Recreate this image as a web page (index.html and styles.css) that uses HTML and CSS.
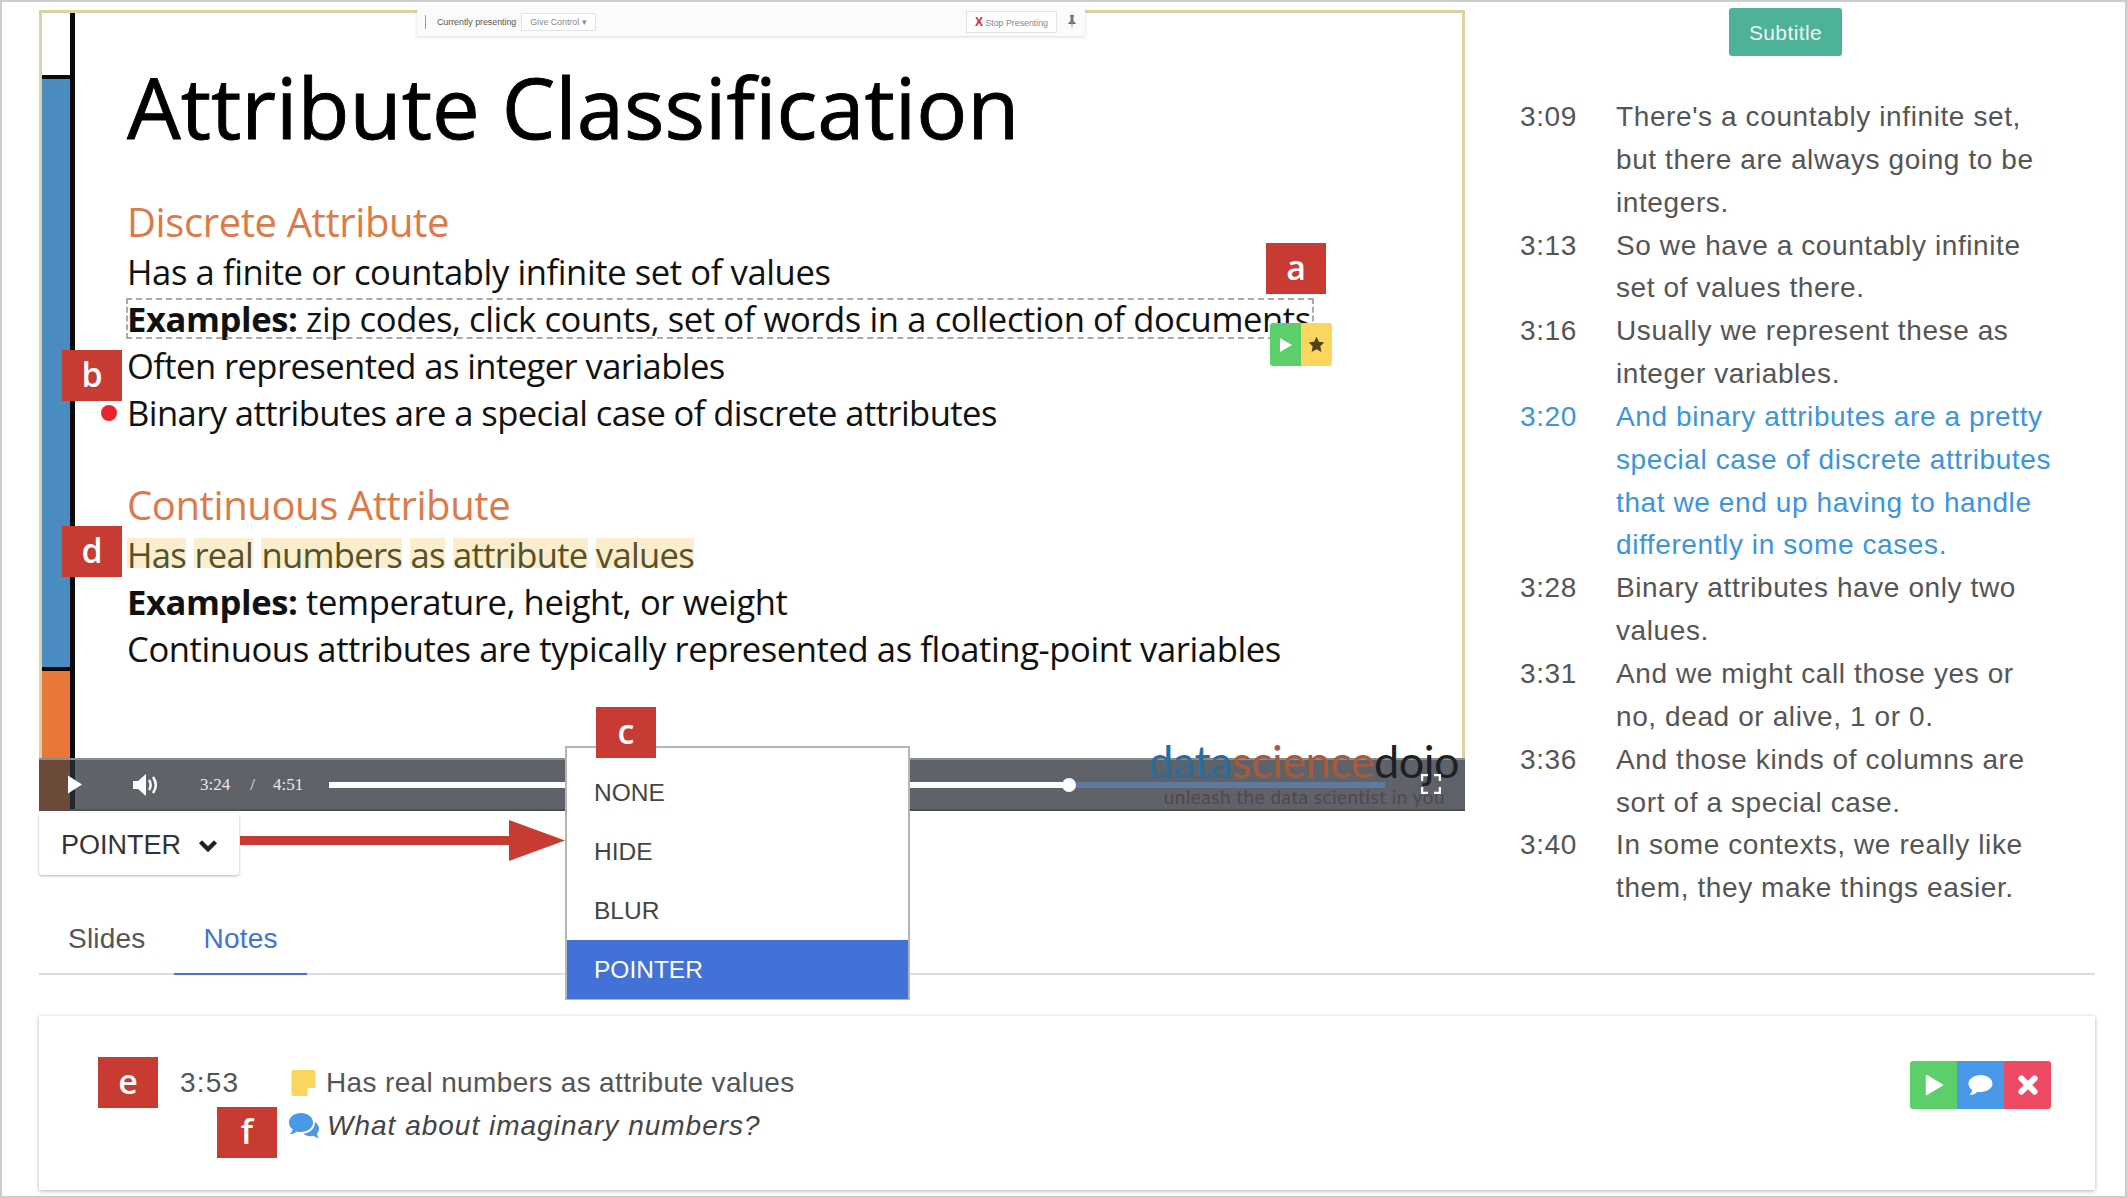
FILE: index.html
```html
<!DOCTYPE html>
<html lang="en">
<head>
    <meta charset="UTF-8">
    <meta name="viewport" content="width=device-width, initial-scale=1.0">
    <title>Attribute Classification</title>
    <link rel="stylesheet" href="styles.css">
</head>
<body>
<div class="frame">
    <div class="top">
        <div class="player-col">
            <div class="player">
                <div class="slide">
                    <div class="rail">
                        <div class="rail-white"></div>
                        <div class="rail-blue"></div>
                        <div class="rail-orange"></div>
                    </div>
                    <div class="slide-body">
                        <h1 class="slide-title">Attribute Classification</h1>
                        <h2 class="slide-head head-one">Discrete Attribute</h2>
                        <p class="slide-line">Has a finite or countably infinite set of values</p>
                        <p class="slide-line"><span class="dashed"><b>Examples:</b> zip codes, click counts, set of words in a collection of documents</span></p>
                        <p class="slide-line line-tight">Often represented as integer variables</p>
                        <p class="slide-line line-tight">Binary attributes are a special case of discrete attributes</p>
                        <h2 class="slide-head head-two">Continuous Attribute</h2>
                        <p class="slide-line line-hl"><span class="hl">Has</span> <span class="hl">real</span> <span class="hl">numbers</span> <span class="hl">as</span> <span class="hl">attribute</span> <span class="hl">values</span></p>
                        <p class="slide-line"><b>Examples:</b> temperature, height, or weight</p>
                        <p class="slide-line">Continuous attributes are typically represented as floating-point variables</p>
                    </div>
                </div>
                <div class="present-bar">
                    <span class="present-sep"></span>
                    <span>Currently presenting</span>
                    <span class="present-btn">Give Control &#9662;</span>
                    <span class="present-gap"></span>
                    <span class="present-btn"><i class="present-x">X</i> Stop Presenting</span>
                    <svg class="present-pin" viewBox="0 0 8 14"><path d="M2 0h4v1L5.500 2v4L8 8.500V9H4.500L4 14l-.5-5H0v-.5L2.500 6V2L2 1z" fill="#777"/></svg>
                </div>
                <div class="controls">
                    <svg class="ctl-play" viewBox="0 0 16 20"><path d="M1 1l14 9-14 9z" fill="#fff"/></svg>
                    <svg class="ctl-vol" viewBox="0 0 26 24"><path d="M0 8h5l8-7v22l-8-7H0z" fill="#fff"/><path d="M16 7c2 3 2 7 0 10M20 4c3.500 5 3.500 11 0 16" fill="none" stroke="#fff" stroke-width="2.500"/></svg>
                    <span class="ctl-time">3:24</span>
                    <span class="ctl-slash">/</span>
                    <span class="ctl-time">4:51</span>
                    <div class="track">
                        <div class="track-done"></div>
                        <div class="track-knob"></div>
                        <div class="track-rest"></div>
                    </div>
                </div>
                <div class="logo">
                    <div class="logo-name"><span class="logo-data">data</span><span class="logo-science">science</span><span class="logo-dojo">dojo</span></div>
                    <div class="logo-tag">unleash the data scientist in you</div>
                </div>
                <svg class="ctl-full" viewBox="0 0 20 20"><path d="M1 7V1h6M13 1h6v6M19 13v6h-6M7 19H1v-6" fill="none" stroke="#fff" stroke-width="2.500"/></svg>
                <span class="red-dot"></span>
                <span class="dash-btns">
                    <span class="dash-btn bg-green"><svg viewBox="0 0 14 16"><path d="M1 1l12 7-12 7z" fill="#fff"/></svg></span>
                    <span class="dash-btn bg-yellow"><svg viewBox="0 0 24 24"><path d="M12 1l3.400 7.200 7.600 1-5.600 5.400 1.500 7.900-6.900-3.900-6.900 3.900 1.500-7.900L1 9.200l7.600-1z" fill="#50431f"/></svg></span>
                </span>
            </div>
            <div class="mode-select">POINTER <svg class="chev" viewBox="0 0 16 12"><path d="M2 3l6 6 6-6" fill="none" stroke="#222" stroke-width="3.500"/></svg></div>
        </div>
        <div class="subs">
            <button class="subs-btn">Subtitle</button>
            <ul class="subs-list">
                <li class="sub-row"><span>3:09</span><span>There's a countably infinite set, but there are always going to be integers.</span></li>
                <li class="sub-row"><span>3:13</span><span>So we have a countably infinite set of values there.</span></li>
                <li class="sub-row"><span>3:16</span><span>Usually we represent these as integer variables.</span></li>
                <li class="sub-row sub-active"><span>3:20</span><span>And binary attributes are a pretty special case of discrete attributes that we end up having to handle differently in some cases.</span></li>
                <li class="sub-row"><span>3:28</span><span>Binary attributes have only two values.</span></li>
                <li class="sub-row"><span>3:31</span><span>And we might call those yes or no, dead or alive, 1 or 0.</span></li>
                <li class="sub-row"><span>3:36</span><span>And those kinds of columns are sort of a special case.</span></li>
                <li class="sub-row"><span>3:40</span><span>In some contexts, we really like them, they make things easier.</span></li>
            </ul>
        </div>
    </div>

    <div class="tabs">
        <a class="tab">Slides</a>
        <a class="tab tab-on">Notes</a>
    </div>

    <div class="note-card">
        <span class="note-time">3:53</span>
        <div class="note-text">
            <div class="note-line">
                <svg class="ic-sticky" viewBox="0 0 24 26"><path d="M2 0h20a2 2 0 0 1 2 2v16l-8 8H2a2 2 0 0 1-2-2V2a2 2 0 0 1 2-2z" fill="#fbd65e"/><path d="M24 18h-7a1 1 0 0 0-1 1v7z" fill="#fff"/></svg>
                Has real numbers as attribute values
            </div>
            <div class="note-line note-comment">
                <svg class="ic-chat" viewBox="0 0 32 28"><path d="M13 1c6.500 0 12 4 12 9.500S19.500 20 13 20c-1.500 0-3-.2-4-.6C7 21 4 22 2 22c1.500-1.500 2.500-3 2.600-5C2 15.500 1 13 1 10.500 1 5 6.500 1 13 1z" fill="#4a98e8"/><path d="M27 10c2.500 1.500 4 4 4 6.500 0 2-.8 3.600-2 5 .1 1.500.8 3 2 4.500-2 0-4-1-5.500-2.200-1 .3-2 .4-3 .4-3 0-5.500-1-7-2.700 6.500-.2 11.500-5 11.500-11.500z" fill="#4a98e8"/></svg>
                What about imaginary numbers?
            </div>
        </div>
        <div class="note-btns">
            <span class="note-btn bg-green"><svg viewBox="0 0 20 24"><path d="M2 2l17 10L2 22z" fill="#fff" stroke="#fff" stroke-width="2" stroke-linejoin="round"/></svg></span>
            <span class="note-btn bg-blue"><svg viewBox="0 0 26 22"><path d="M13 1c6.600 0 12 3.600 12 8.500S19.600 18 13 18c-1 0-2-.1-3-.3C8 19.800 5 21 2 21c1.500-1.500 2.500-3 2.600-5C2.400 14.500 1 12 1 9.500 1 4.600 6.400 1 13 1z" fill="#fff"/></svg></span>
            <span class="note-btn bg-red"><svg viewBox="0 0 20 20"><path d="M4 4l12 12M16 4L4 16" fill="none" stroke="#fff" stroke-width="5.500" stroke-linecap="round"/></svg></span>
        </div>
    </div>

    <!-- things sitting on top of the screenshot -->
    <svg class="pointer-arrow" viewBox="0 0 325 41"><path d="M0 16h269V0l56 20.500-56 20.500V25H0z" fill="#c73b33"/></svg>

    <ul class="mode-menu">
        <li>NONE</li>
        <li>HIDE</li>
        <li>BLUR</li>
        <li class="mode-on">POINTER</li>
    </ul>

    <span class="tag tag-a">a</span>
    <span class="tag tag-b">b</span>
    <span class="tag tag-c">c</span>
    <span class="tag tag-d">d</span>
    <span class="tag tag-e">e</span>
    <span class="tag tag-f">f</span>
</div>
</body>
</html>
```

FILE: styles.css
```css
* { box-sizing: border-box; }
html, body { margin: 0; background: #fff; }
body { font-family: "Liberation Sans", Arial, sans-serif; color: #444; }

.frame {
    position: relative;
    width: 2127px;
    height: 1198px;
    padding: 8px 30px 0 37px;
    border: 2px solid #cdcdcd;
    overflow: hidden;
}

.top { display: flex; }
.player-col { width: 1426px; flex: none; }
.player { position: relative; border: 3px solid #d9d5a3; border-bottom: 0; height: 801px; }

.slide { display: flex; height: 745px; background: #fff; overflow: hidden; }
.rail { width: 33px; flex: none; display: flex; flex-direction: column; border-right: 5px solid #0a0a0a; }
.rail-white { height: 66px; border-bottom: 4px solid #0a0a0a; }
.rail-blue { height: 592px; background: #4a8bc2; border-bottom: 4px solid #0a0a0a; }
.rail-orange { flex: 1; background: #e8783a; }

.slide-body { flex: 1; padding: 0 0 0 52px; color: #111; font-family: "Open Sans", sans-serif; }
.slide-title { margin: 35px 0 0; font-size: 85px; line-height: 116px; font-weight: 400; color: #000; letter-spacing: 0; -webkit-text-stroke: .9px #000; }
.slide-head { margin: 0; font-size: 40px; line-height: 52px; font-weight: 400; color: #dc7a48; letter-spacing: -.4px; }
.head-one { margin-top: 32px; }
.head-two { margin-top: 43px; }
.slide-line { margin: 0; font-size: 34.600px; line-height: 47px; white-space: nowrap; letter-spacing: -.4px; }
.slide-line b { font-weight: 700; }
.line-tight { letter-spacing: -.58px; }
.line-hl { letter-spacing: -.7px; color: #55522a; }
.dashed { outline: 2px dashed #aaa; outline-offset: -1px; display: inline-block; line-height: 39px; width: 1186px; }
.hl { background: linear-gradient(transparent 15%, #fceecd 15% 79%, transparent 79%); }

.present-bar {
    position: absolute;
    left: 375px;
    top: -6px;
    width: 668px;
    height: 29px;
    display: flex;
    align-items: center;
    gap: 5px;
    padding: 0 9px 0 8px;
    background: #fbfbfb;
    box-shadow: 0 1px 3px rgba(0,0,0,.15);
    font-size: 8.800px;
    color: #555;
}
.present-sep { width: 1px; height: 14px; background: #999; margin-right: 6px; }
.present-btn { padding: 3px 8px; border: 1px solid #e3e3e3; background: #fff; color: #888; }
.present-gap { flex: 1; }
.present-x { color: #d23; font-style: normal; font-weight: 700; font-size: 12px; }
.present-pin { width: 8px; height: 14px; margin-left: 6px; }

.controls {
    position: relative;
    height: 53px;
    margin-left: -3px;
    margin-right: -3px;
    display: flex;
    align-items: center;
    background: linear-gradient(90deg, #6b4a3a 31px, #1f2730 31px 36px, #5f6268 36px);
    box-shadow: inset 0 2px 0 #8a8c90, inset 0 -2px 0 #4e5055;
    color: #e8e8e8;
}
.ctl-play { width: 16px; height: 21px; margin-left: 28px; }
.ctl-vol { width: 26px; height: 24px; margin-left: 50px; }
.ctl-time { font-family: "Liberation Serif", serif; font-size: 17px; }
.ctl-vol + .ctl-time { margin-left: 41px; }
.ctl-slash { font-family: "Liberation Serif", serif; font-size: 17px; margin: 0 18px 0 20px; }
.track { position: absolute; left: 290px; top: 24px; width: 1056px; height: 6px; display: flex; align-items: center; }
.track-done { width: 737px; height: 6px; background: #fff; }
.track-knob { width: 14px; height: 14px; border-radius: 50%; background: #fff; margin-left: -4px; flex: none; }
.track-rest { flex: 1; height: 6px; background: #5f7a9e; }

.logo { position: absolute; right: 3px; top: 722px; text-align: right; }
.logo-name { font-family: Lato, sans-serif; font-weight: 400; font-size: 45px; line-height: 52px; letter-spacing: -.5px; }
.logo-data { color: #2a6c9c; }
.logo-science { color: #a85a3c; }
.logo-dojo { color: #1d2126; }
.logo-tag { font-family: Lato, sans-serif; font-size: 19px; line-height: 20px; color: #50484f; padding-right: 14px; letter-spacing: .45px; margin-top: 0; }
.ctl-full { position: absolute; left: 1379px; top: 761px; width: 20px; height: 20px; }

.red-dot { position: absolute; left: 59px; top: 392px; width: 16px; height: 16px; border-radius: 50%; background: #e8262b; }

.dash-btns { position: absolute; left: 1228px; top: 310px; display: flex; }
.dash-btn { width: 31px; height: 43px; display: flex; align-items: center; justify-content: center; }
.dash-btn:first-child { border-radius: 3px 0 0 3px; }
.dash-btn:last-child { border-radius: 0 3px 3px 0; }
.dash-btn svg { width: 14px; height: 16px; }
.dash-btn.bg-yellow svg { width: 17px; height: 17px; }
.bg-green { background: #5ccf6a; }
.bg-yellow { background: #fbd65e; }
.bg-blue { background: #4a98e8; }
.bg-red { background: #ee4a63; }

.mode-select {
    width: 200px;
    height: 62px;
    margin-top: 2px;
    padding: 2px 0 0 22px;
    display: flex;
    align-items: center;
    gap: 17px;
    background: #fff;
    border-radius: 3px;
    box-shadow: 0 1px 3px rgba(0,0,0,.3);
    font-size: 27px;
    color: #333;
}
.chev { width: 20px; height: 15px; }

.subs { margin-left: 55px; flex: 1; display: flex; flex-direction: column; }
.subs-btn {
    flex: none;
    align-self: flex-start;
    margin-left: 209px;
    margin-top: -2px;
    padding-top: 3px;
    width: 113px;
    height: 48px;
    border: 0;
    border-radius: 3px;
    background: #4eb299;
    color: rgba(255,255,255,.92);
    font-family: "Liberation Sans", sans-serif;
    font-size: 21px;
    letter-spacing: .4px;
}
.subs-list { list-style: none; margin: 40px 0 -3px; padding: 0; }
.sub-row { display: grid; grid-template-columns: 96px 442px; font-size: 28px; line-height: 42.850px; letter-spacing: .6px; color: #555; }
.sub-active { color: #3b94e0; }

.tabs { display: flex; height: 68px; border-bottom: 2px solid #ddd; }
.tab { padding: 0 29px 0 29px; font-size: 28px; line-height: 64px; height: 68px; letter-spacing: .2px; color: #555; }
.tab-on { color: #4272d7; border-bottom: 2px solid #4272d7; }

.note-card {
    display: flex;
    align-items: flex-start;
    height: 174px;
    margin-top: 41px;
    padding: 45px 44px 0 141px;
    background: #fff;
    box-shadow: 0 1px 4px rgba(0,0,0,.3);
    font-size: 28px;
    letter-spacing: .35px;
    color: #555;
}
.note-time { width: 111px; line-height: 43px; letter-spacing: 1.2px; flex: none; }
.note-text { flex: 1; }
.note-line { display: flex; align-items: center; gap: 10px; line-height: 43px; }
.note-comment { font-style: italic; color: #444; gap: 7px; letter-spacing: 1px; }
.ic-sticky { width: 25px; height: 26px; }
.ic-chat { width: 32px; height: 28px; margin-left: -3px; }
.note-btns { display: flex; }
.note-btn { width: 47px; height: 48px; display: flex; align-items: center; justify-content: center; }
.note-btn:first-child { border-radius: 3px 0 0 3px; }
.note-btn:last-child { border-radius: 0 3px 3px 0; }
.note-btn svg { width: 22px; height: 22px; }
.bg-blue svg { width: 27px; }

.tag {
    position: absolute;
    width: 60px;
    height: 51px;
    background: #c73b33;
    color: #fff;
    font-family: "Open Sans", sans-serif;
    font-size: 34px;
    font-weight: 600;
    line-height: 48px;
    text-align: center;
}
.tag-a { left: 1264px; top: 241px; }
.tag-b { left: 60px; top: 348px; }
.tag-c { left: 594px; top: 705px; }
.tag-d { left: 60px; top: 524px; }
.tag-e { left: 96px; top: 1055px; }
.tag-f { left: 215px; top: 1105px; }

.pointer-arrow { position: absolute; left: 238px; top: 818px; width: 325px; height: 41px; }

.mode-menu {
    position: absolute;
    left: 563px;
    top: 744px;
    width: 345px;
    height: 254px;
    margin: 0;
    padding: 15px 0 0;
    list-style: none;
    background: #fff;
    border: 2px solid #b5b5b5;
    font-size: 24.500px;
    color: #444;
}
.mode-menu li { height: 59px; line-height: 59px; padding-left: 27px; }
.mode-menu .mode-on { background: #4272d7; color: #fff; }
```
